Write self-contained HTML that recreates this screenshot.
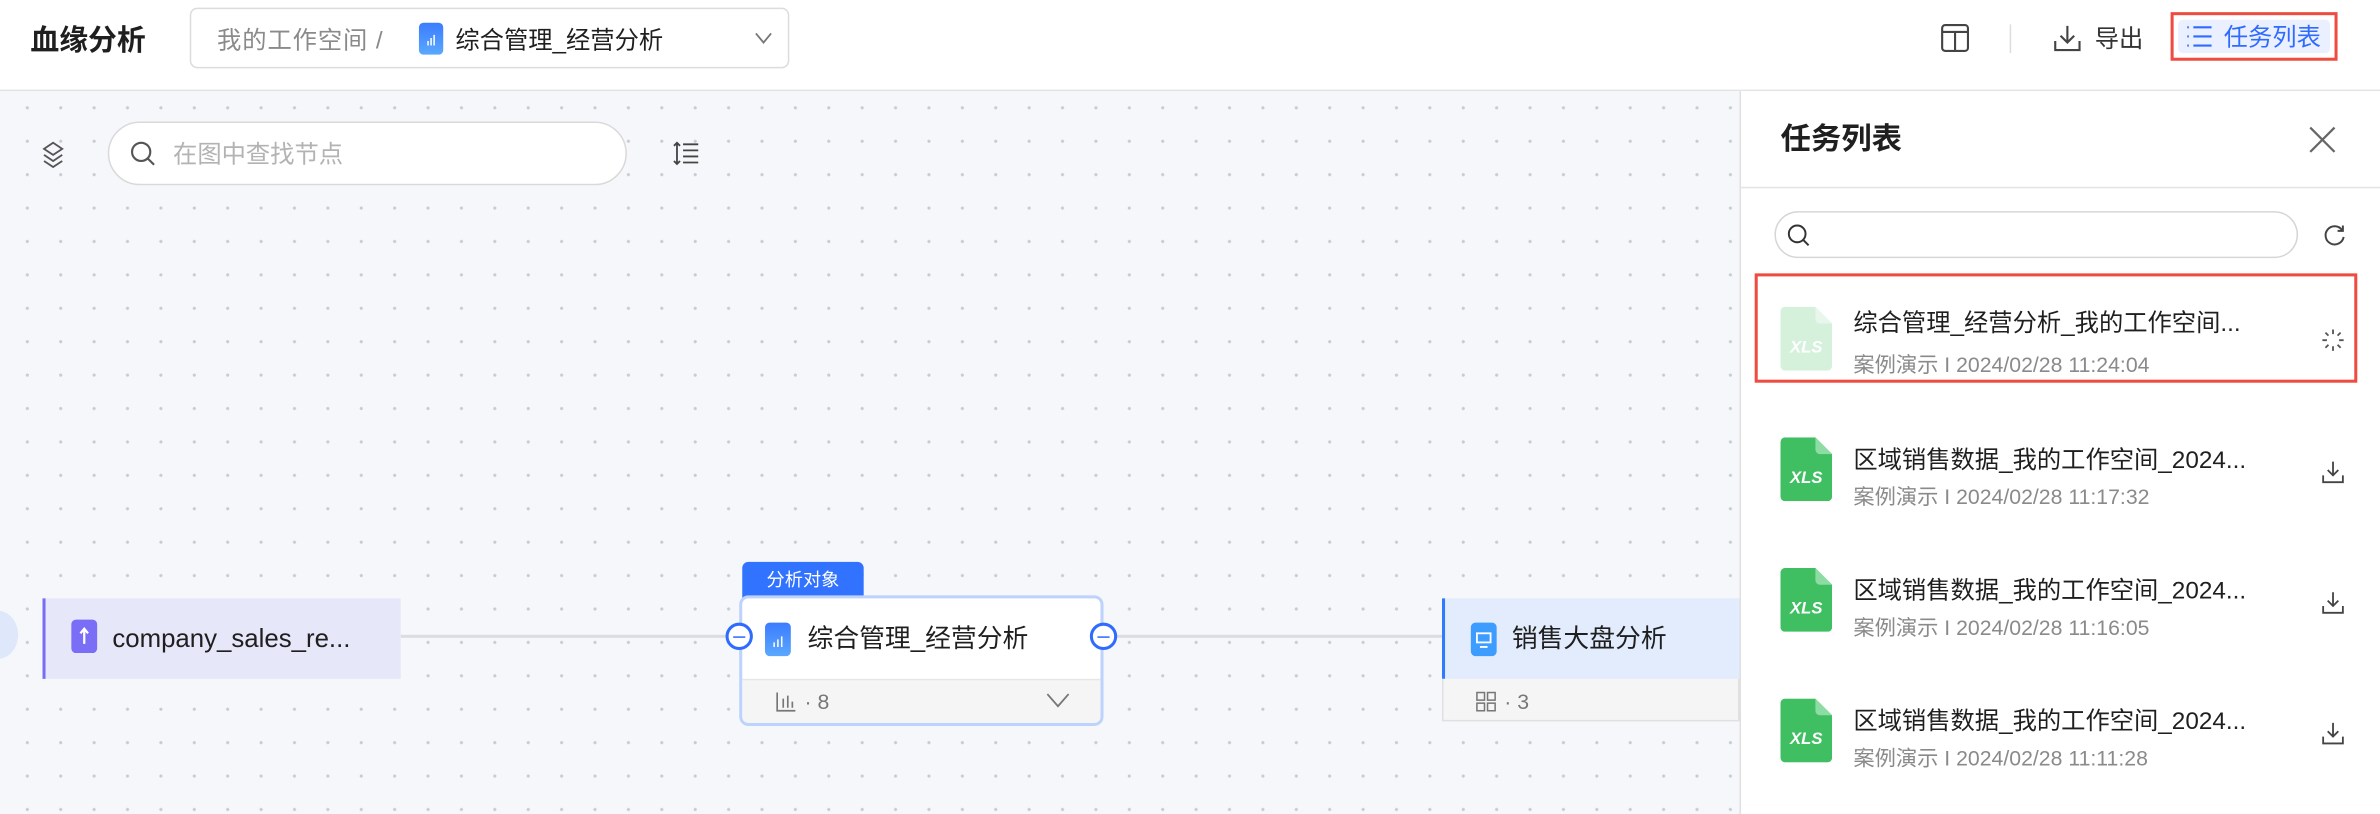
<!DOCTYPE html>
<html><head><meta charset="utf-8"><style>
*{box-sizing:border-box;margin:0;padding:0;line-height:1.2}
html,body{width:2380px;height:814px;overflow:hidden;background:#fff}
#w{position:absolute;left:0;top:0;width:1568px;height:536px;transform:scale(1.5179,1.5187);transform-origin:0 0;font-family:"Liberation Sans","Noto Sans CJK SC",sans-serif;color:#1f1f1f}
.a{position:absolute}
.canvas{left:0;top:60px;width:1146px;height:476px;background-color:#f6f7fb;background-image:radial-gradient(circle,#c9cbd3 0.9px,transparent 1.2px);background-size:22px 22px;background-position:7px 0}
.xls{position:absolute;width:34px;height:42px}
.t{font-size:16px;white-space:nowrap}
.s{font-size:14px;color:#8a8a8a;white-space:nowrap}
</style></head><body><div id="w">
<div class="a" style="left:0;top:0;width:1568px;height:60px;border-bottom:1px solid #e3e3e3;background:#fff"></div>
<div class="a" style="left:20px;top:17px;font-size:19px;font-weight:bold">血缘分析</div>
<div class="a" style="left:125px;top:5px;width:395px;height:40px;border:1px solid #dcdcdc;border-radius:5px"></div>
<div class="a" style="left:143px;top:18px;font-size:16px;color:#8a8a8a;letter-spacing:0.6px">我的工作空间 /</div>
<div class="a" style="left:276px;top:15px;width:16px;height:21px;border-radius:3px;background:linear-gradient(#3b7cff,#5aa8ff)"><svg width="16" height="21"><path d="M6 15v-3M8 15v-5M10 15v-7" stroke="#fff" stroke-width="1"/></svg></div>
<div class="a t" style="left:300px;top:18px">综合管理_经营分析</div>
<svg class="a" style="left:497px;top:20px" width="12" height="10"><path d="M1 2l5 6 5-6" fill="none" stroke="#777" stroke-width="1.2"/></svg>
<svg class="a" style="left:1278px;top:15px" width="20" height="20"><rect x="1.5" y="1.5" width="17" height="17" rx="2" fill="none" stroke="#444" stroke-width="1.4"/><path d="M1.5 6h17M10 6v12.5" stroke="#444" stroke-width="1.4"/></svg>
<div class="a" style="left:1324px;top:16px;width:1px;height:19px;background:#ddd"></div>
<svg class="a" style="left:1352px;top:15px" width="20" height="20"><path d="M10 2v11M5.5 8.5l4.5 4.5 4.5-4.5M2 12v6h16v-6" fill="none" stroke="#444" stroke-width="1.4"/></svg>
<div class="a" style="left:1380px;top:17px;font-size:16px;color:#333">导出</div>
<div class="a" style="left:1430px;top:8px;width:110px;height:32px;border:2px solid #ef4c41;background:#fff"><div style="position:absolute;left:3px;top:3px;right:3px;bottom:3px;background:#eaf0ff;border-radius:3px"></div></div>
<svg class="a" style="left:1440px;top:16px" width="18" height="16"><path d="M1 2h1M1 8h1M1 14h1M5 2h12M5 8h12M5 14h12" stroke="#2f6bff" stroke-width="1.4"/></svg>
<div class="a" style="left:1465px;top:16px;font-size:16px;color:#2f6bff">任务列表</div>
<div class="a canvas"></div>
<svg class="a" style="left:26px;top:92px" width="18" height="20"><path d="M9 2l6 4-6 4-6-4z M3 10l6 4 6-4 M3 14l6 4 6-4" fill="none" stroke="#555" stroke-width="1.2"/></svg>
<div class="a" style="left:71px;top:80px;width:342px;height:42px;border:1px solid #d9d9d9;border-radius:21px;background:#fff"></div>
<svg class="a" style="left:85px;top:92px" width="18" height="18"><circle cx="8" cy="8" r="6" fill="none" stroke="#555" stroke-width="1.4"/><path d="M12.5 12.5l4 4" stroke="#555" stroke-width="1.4"/></svg>
<div class="a" style="left:114px;top:93px;font-size:16px;color:#b3b3b3">在图中查找节点</div>
<svg class="a" style="left:443px;top:92px" width="18" height="18"><path d="M3 2v14M1 4l2-2 2 2M1 14l2 2 2-2M7 3h10M7 7h10M7 11h10M7 15h10" fill="none" stroke="#444" stroke-width="1.2"/></svg>
<div class="a" style="left:264px;top:418px;width:223px;height:2px;background:#dcdde2"></div>
<div class="a" style="left:727px;top:418px;width:223px;height:2px;background:#dcdde2"></div>
<div class="a" style="left:-16px;top:402px;width:28px;height:32px;border-radius:50%;background:#dfe8fb"></div>
<div class="a" style="left:28px;top:394px;width:236px;height:53px;background:#e7e7fa;border-left:2px solid #7a6df5"></div>
<div class="a" style="left:47px;top:408px;width:17px;height:22px;border-radius:3px;background:#7b6ef6"><svg width="17" height="22"><path d="M8.5 7v9M6 9l2.5-3 2.5 3" stroke="#fff" stroke-width="1.5" fill="none"/></svg></div>
<div class="a t" style="left:74px;top:411px;font-size:17px">company_sales_re...</div>
<div class="a" style="left:489px;top:370px;width:80px;height:24px;background:#3172ff;border-radius:4px 4px 0 0;color:#fff;font-size:12px;text-align:center;line-height:24px">分析对象</div>
<div class="a" style="left:487px;top:392px;width:240px;height:86px;border:2px solid #bdd3fb;border-radius:6px;background:#fff;overflow:hidden"><div style="position:absolute;left:0;right:0;top:53px;bottom:0;background:#f5f5f5;border-top:1px solid #e6e6e6"></div></div>
<div class="a" style="left:504px;top:410px;width:17px;height:22px;border-radius:3px;background:linear-gradient(#3b7cff,#5aa8ff)"><svg width="17" height="22"><path d="M6 16v-3M8.5 16v-5M11 16v-7" stroke="#fff" stroke-width="1"/></svg></div>
<div class="a t" style="left:532px;top:411px;font-size:17px">综合管理_经营分析</div>
<div class="a" style="left:478px;top:410px;width:18px;height:18px;border-radius:50%;border:2px solid #2f6bff;background:#fff"><div style="position:absolute;left:3px;top:6.5px;width:8px;height:1.5px;background:#2f6bff"></div></div>
<div class="a" style="left:718px;top:410px;width:18px;height:18px;border-radius:50%;border:2px solid #2f6bff;background:#fff"><div style="position:absolute;left:3px;top:6.5px;width:8px;height:1.5px;background:#2f6bff"></div></div>
<svg class="a" style="left:511px;top:455px" width="14" height="14"><path d="M1 1v12h12M5 11V5M8 11V3M11 11V7" stroke="#777" stroke-width="1.1" fill="none"/></svg>
<div class="a s" style="left:530px;top:454px;color:#777">· 8</div>
<svg class="a" style="left:689px;top:456px" width="16" height="10"><path d="M1 1l7 8 7-8" fill="none" stroke="#777" stroke-width="1.2"/></svg>
<div class="a" style="left:950px;top:394px;width:196px;height:53px;background:#e2ecfd;border-left:2px solid #2f7bff"></div>
<div class="a" style="left:950px;top:447px;width:196px;height:28px;background:#f5f5f5;border:1px solid #e0e0e0;border-top:none"></div>
<div class="a" style="left:969px;top:410px;width:17px;height:22px;border-radius:3px;background:#3d9cff"><svg width="17" height="22"><rect x="4" y="7" width="9" height="6" fill="none" stroke="#fff" stroke-width="1.2"/><path d="M6 16h5" stroke="#fff" stroke-width="1.2"/></svg></div>
<div class="a t" style="left:996px;top:411px;font-size:17px">销售大盘分析</div>
<svg class="a" style="left:972px;top:455px" width="14" height="14"><rect x="1" y="1" width="5" height="5" fill="none" stroke="#777"/><rect x="8" y="1" width="5" height="5" fill="none" stroke="#777"/><rect x="1" y="8" width="5" height="5" fill="none" stroke="#777"/><rect x="8" y="8" width="5" height="5" fill="none" stroke="#777"/></svg>
<div class="a s" style="left:991px;top:454px;color:#777">· 3</div>
<div class="a" style="left:1146px;top:60px;width:422px;height:476px;background:#fff;border-left:1px solid #e0e0e0"></div>
<div class="a" style="left:1173px;top:80px;font-size:20px;font-weight:bold">任务列表</div>
<svg class="a" style="left:1520px;top:82px" width="20" height="20"><path d="M2 2l16 16M18 2L2 18" stroke="#666" stroke-width="1.5"/></svg>
<div class="a" style="left:1147px;top:123px;width:421px;height:1px;background:#e3e3e3"></div>
<div class="a" style="left:1169px;top:139px;width:345px;height:31px;border:1px solid #d6d6d6;border-radius:16px"></div>
<svg class="a" style="left:1177px;top:147px" width="16" height="16"><circle cx="7" cy="7" r="5.5" fill="none" stroke="#333" stroke-width="1.3"/><path d="M11 11l3.5 3.5" stroke="#333" stroke-width="1.3"/></svg>
<svg class="a" style="left:1530px;top:147px" width="16" height="16"><path d="M13 4.5A6 6 0 1 0 14 9" fill="none" stroke="#444" stroke-width="1.3"/><path d="M13.5 1.5v3.5h-3.5" fill="none" stroke="#444" stroke-width="1.3"/></svg>
<div class="a" style="left:1156px;top:180px;width:397px;height:72px;border:2px solid #ef4c41"></div>
<svg class="xls" style="left:1173px;top:202px" viewBox="0 0 34 42"><path d="M3 0h20l11 11v28a3 3 0 0 1-3 3H3a3 3 0 0 1-3-3V3a3 3 0 0 1 3-3z" fill="#d5f1dc"/><path d="M23 0l11 11H26a3 3 0 0 1-3-3z" fill="#e8f7ec"/><text x="17" y="30" font-size="11" font-style="italic" font-weight="bold" fill="#fff" text-anchor="middle" font-family="Liberation Sans">XLS</text></svg>
<div class="a t" style="left:1221px;top:204px">综合管理_经营分析_我的工作空间...</div>
<div class="a s" style="left:1221px;top:232px">案例演示 I 2024/02/28 11:24:04</div>
<svg class="a" style="left:1529px;top:216px" width="16" height="16"><g stroke="#555" stroke-width="1.2"><path d="M8 1v3M8 12v3M1 8h3M12 8h3M3 3l2 2M11 11l2 2M3 13l2-2M11 5l2-2"/></g></svg>
<svg class="xls" style="left:1173px;top:288px" viewBox="0 0 34 42"><path d="M3 0h20l11 11v28a3 3 0 0 1-3 3H3a3 3 0 0 1-3-3V3a3 3 0 0 1 3-3z" fill="#3fbf62"/><path d="M23 0l11 11H26a3 3 0 0 1-3-3z" fill="#8ddca3"/><text x="17" y="30" font-size="11" font-style="italic" font-weight="bold" fill="#fff" text-anchor="middle" font-family="Liberation Sans">XLS</text></svg>
<div class="a t" style="left:1221px;top:294px">区域销售数据_我的工作空间_2024...</div>
<div class="a s" style="left:1221px;top:319px">案例演示 I 2024/02/28 11:17:32</div>
<svg class="a" style="left:1529px;top:303px" width="16" height="16"><path d="M8 1v9M4.5 6.5L8 10l3.5-3.5M1.5 10v4.5h13V10" fill="none" stroke="#444" stroke-width="1.2"/></svg>
<svg class="xls" style="left:1173px;top:374px" viewBox="0 0 34 42"><path d="M3 0h20l11 11v28a3 3 0 0 1-3 3H3a3 3 0 0 1-3-3V3a3 3 0 0 1 3-3z" fill="#3fbf62"/><path d="M23 0l11 11H26a3 3 0 0 1-3-3z" fill="#8ddca3"/><text x="17" y="30" font-size="11" font-style="italic" font-weight="bold" fill="#fff" text-anchor="middle" font-family="Liberation Sans">XLS</text></svg>
<div class="a t" style="left:1221px;top:380px">区域销售数据_我的工作空间_2024...</div>
<div class="a s" style="left:1221px;top:405px">案例演示 I 2024/02/28 11:16:05</div>
<svg class="a" style="left:1529px;top:389px" width="16" height="16"><path d="M8 1v9M4.5 6.5L8 10l3.5-3.5M1.5 10v4.5h13V10" fill="none" stroke="#444" stroke-width="1.2"/></svg>
<svg class="xls" style="left:1173px;top:460px" viewBox="0 0 34 42"><path d="M3 0h20l11 11v28a3 3 0 0 1-3 3H3a3 3 0 0 1-3-3V3a3 3 0 0 1 3-3z" fill="#3fbf62"/><path d="M23 0l11 11H26a3 3 0 0 1-3-3z" fill="#8ddca3"/><text x="17" y="30" font-size="11" font-style="italic" font-weight="bold" fill="#fff" text-anchor="middle" font-family="Liberation Sans">XLS</text></svg>
<div class="a t" style="left:1221px;top:466px">区域销售数据_我的工作空间_2024...</div>
<div class="a s" style="left:1221px;top:491px">案例演示 I 2024/02/28 11:11:28</div>
<svg class="a" style="left:1529px;top:475px" width="16" height="16"><path d="M8 1v9M4.5 6.5L8 10l3.5-3.5M1.5 10v4.5h13V10" fill="none" stroke="#444" stroke-width="1.2"/></svg>
</div></body></html>
